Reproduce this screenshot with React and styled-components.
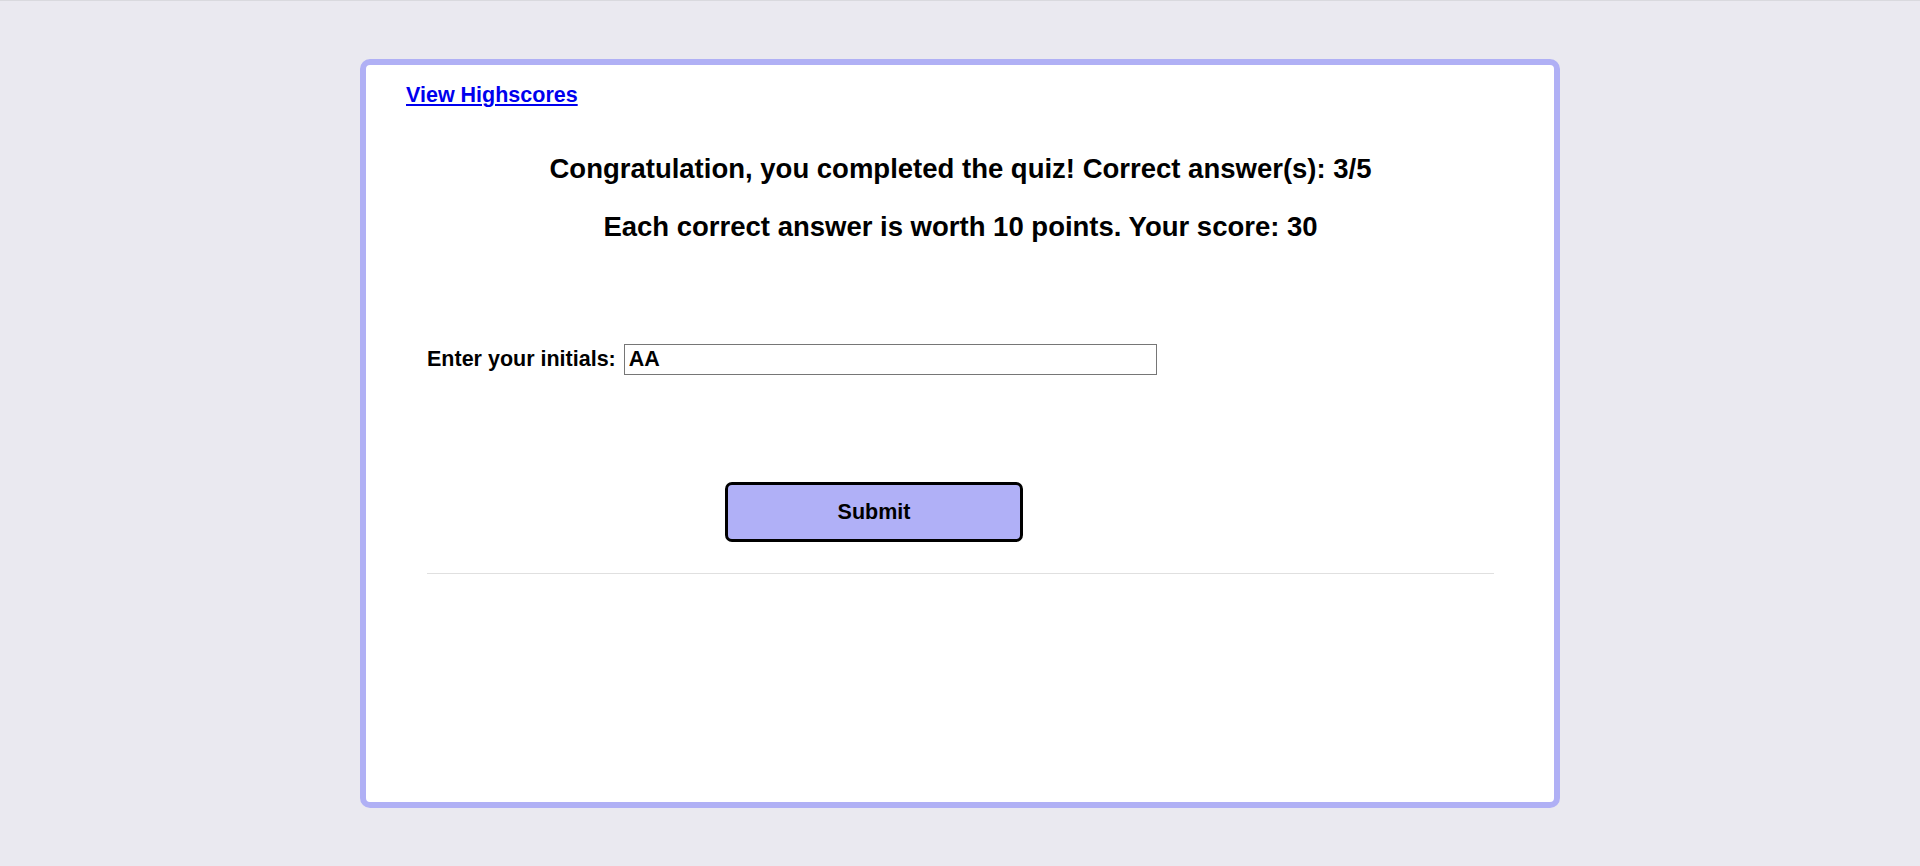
import React from 'react'
import styled, { createGlobalStyle } from 'styled-components';

const GlobalStyle = createGlobalStyle`
  html, body {
    margin: 0;
    padding: 0;
    background: #eae9f0;
  }
  body {
    border-top: 1px solid #d9d9de;
    min-height: 866px;
    box-sizing: border-box;
    font-family: "Liberation Sans", Arial, sans-serif;
  }
`;

const Page = styled.div`
  display: flex;
  justify-content: center;
  padding-top: 58px;
`;

const Card = styled.div`
  box-sizing: border-box;
  width: 1200px;
  height: 749px;
  background: #ffffff;
  border: 6px solid #b0b0f5;
  border-radius: 10px;
  padding-top: 18px;
  display: flex;
  flex-direction: column;
`;

const HighscoreLink = styled.a`
  align-self: flex-start;
  margin-left: 40px;
  color: #0000ee;
  font-weight: 700;
  font-size: 21.5px;
  line-height: 25px;
  text-decoration: underline;
  cursor: pointer;
`;

const Content = styled.div`
  margin: 45px 60px 0 61px;
  display: flex;
  flex-direction: column;
`;

const Messages = styled.div`
  display: flex;
  flex-direction: column;
  gap: 26px;
  align-items: center;
`;

const Message = styled.h2`
  margin: 0;
  font-size: 27.5px;
  line-height: 32px;
  font-weight: 700;
  color: #000;
  text-align: center;
  white-space: nowrap;
`;

const InitialsRow = styled.form`
  margin-top: 101px;
  display: flex;
  align-items: center;
  gap: 8px;
`;

const Label = styled.label`
  font-size: 21.5px;
  font-weight: 700;
  color: #000;
`;

const InitialsInput = styled.input`
  box-sizing: border-box;
  width: 533px;
  height: 31px;
  border: 1px solid #767676;
  padding: 0 4px;
  font-family: "Liberation Sans", Arial, sans-serif;
  font-size: 21.5px;
  font-weight: 700;
  color: #000;
  outline: none;
`;

const SubmitButton = styled.button`
  box-sizing: border-box;
  margin: 107px 0 0 298px;
  width: 298px;
  height: 60px;
  border: 3px solid #000;
  border-radius: 7px;
  background: #b0b0f7;
  font-family: "Liberation Sans", Arial, sans-serif;
  font-size: 21.5px;
  font-weight: 700;
  color: #000;
  cursor: pointer;
`;

const Divider = styled.hr`
  margin: 31px 0 0 0;
  border: none;
  border-top: 1px solid #e0e0e0;
  height: 0;
`;

const App = () => {
  return (
    <>
      <GlobalStyle />
      <Page>
        <Card>
          <HighscoreLink href="#highscores">View Highscores</HighscoreLink>
          <Content>
            <Messages>
              <Message>Congratulation, you completed the quiz! Correct answer(s): 3/5</Message>
              <Message>Each correct answer is worth 10 points. Your score: 30</Message>
            </Messages>
            <InitialsRow onSubmit={(e) => e.preventDefault()}>
              <Label htmlFor="initials">Enter your initials:</Label>
              <InitialsInput id="initials" defaultValue="AA" />
            </InitialsRow>
            <SubmitButton type="button">Submit</SubmitButton>
            <Divider />
          </Content>
        </Card>
      </Page>
    </>
  );
};

export default App
